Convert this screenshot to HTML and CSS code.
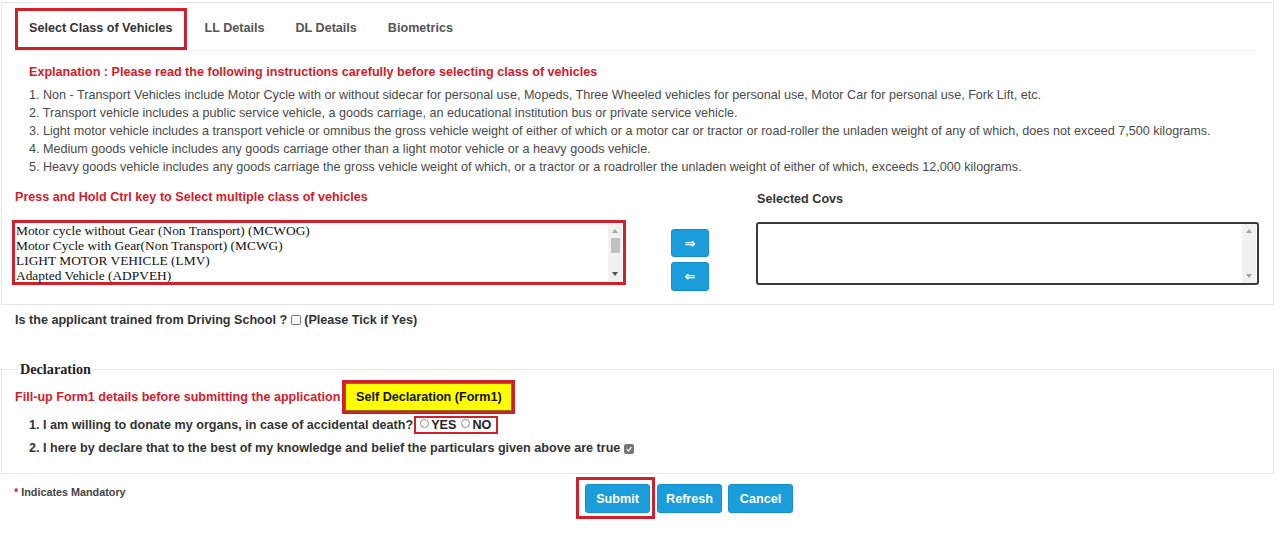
FILE: index.html
```html
<!DOCTYPE html>
<html lang="en">
<head>
<meta charset="utf-8">
<title>Select Class of Vehicles</title>
<link rel="stylesheet" href="styles.css">
</head>
<body>
<div class="panel">
  <ul class="tabs">
    <li class="tab active">Select Class of Vehicles</li>
    <li class="tab">LL Details</li>
    <li class="tab">DL Details</li>
    <li class="tab">Biometrics</li>
  </ul>
  <div class="explain">
    <div class="warn heading">Explanation : Please read the following instructions carefully before selecting class of vehicles</div>
    <div class="line">1. Non - Transport Vehicles include Motor Cycle with or without sidecar for personal use, Mopeds, Three Wheeled vehicles for personal use, Motor Car for personal use, Fork Lift, etc.</div>
    <div class="line">2. Transport vehicle includes a public service vehicle, a goods carriage, an educational institution bus or private service vehicle.</div>
    <div class="line">3. Light motor vehicle includes a transport vehicle or omnibus the gross vehicle weight of either of which or a motor car or tractor or road-roller the unladen weight of any of which, does not exceed 7,500 kilograms.</div>
    <div class="line">4. Medium goods vehicle includes any goods carriage other than a light motor vehicle or a heavy goods vehicle.</div>
    <div class="line">5. Heavy goods vehicle includes any goods carriage the gross vehicle weight of which, or a tractor or a roadroller the unladen weight of either of which, exceeds 12,000 kilograms.</div>
  </div>
  <div class="cov-row">
    <div class="cov-left">
      <div class="warn label">Press and Hold Ctrl key to Select multiple class of vehicles</div>
      <div class="listbox">
        <div class="options">
          <div class="opt">Motor cycle without Gear (Non Transport) (MCWOG)</div>
          <div class="opt">Motor Cycle with Gear(Non Transport) (MCWG)</div>
          <div class="opt">LIGHT MOTOR VEHICLE (LMV)</div>
          <div class="opt">Adapted Vehicle (ADPVEH)</div>
        </div>
        <div class="sbar">
          <span class="arr up"></span>
          <span class="thumb"></span>
          <span class="track"></span>
          <span class="arr down"></span>
        </div>
      </div>
    </div>
    <div class="arrows">
      <button class="abtn" type="button">&#8658;</button>
      <button class="abtn" type="button">&#8656;</button>
    </div>
    <div class="cov-right">
      <div class="label dark">Selected Covs</div>
      <div class="selbox">
        <div class="sbar light">
          <span class="arr up grey"></span>
          <span class="track"></span>
          <span class="arr down grey"></span>
        </div>
      </div>
    </div>
  </div>
</div>

<div class="school">Is the applicant trained from Driving School ? <span class="cb"></span> (Please Tick if Yes)</div>

<fieldset class="decl">
  <legend>Declaration</legend>
  <div class="form1-row">
    <span class="warn">Fill-up Form1 details before submitting the application</span>
    <button class="yellow" type="button">Self Declaration (Form1)</button>
  </div>
  <div class="item item1">1. I am willing to donate my organs, in case of accidental death?<span class="yesno"><span class="radio"></span>YES<span class="radio second"></span>NO</span></div>
  <div class="item item2">2. I here by declare that to the best of my knowledge and belief the particulars given above are true <span class="cb checked"><svg viewBox="0 0 10 10" width="8" height="8"><path d="M2 5.2 L4.2 7.3 L8 2.8" fill="none" stroke="#fff" stroke-width="1.6"/></svg></span></div>
</fieldset>

<div class="footer">
  <div class="mandatory"><span class="star">*</span> Indicates Mandatory</div>
  <div class="submit-wrap"><button class="btn" type="button">Submit</button></div>
  <button class="btn refresh" type="button">Refresh</button>
  <button class="btn cancel" type="button">Cancel</button>
</div>
</body>
</html>
```

FILE: styles.css
```css
* { box-sizing: border-box; }
body {
  margin: 0;
  font-family: "Liberation Sans", Arial, sans-serif;
  font-size: 12.6px;
  color: #333;
  background: #fff;
}
.warn { color: #d0202b; font-weight: bold; }
.panel {
  margin: 2px 6px 0 1px;
  border: 1px solid #e6e6e6;
  padding-bottom: 13px;
}
.tabs {
  list-style: none;
  margin: 5px 17px 0 13px;
  padding: 0;
  display: flex;
  border-bottom: 1px solid #eee;
}
.tab {
  height: 42px;
  line-height: 40px;
  padding: 0 15px;
  font-weight: bold;
  color: #555;
  margin-right: 1px;
}
.tab.active {
  border: 3px solid #d0202b;
  line-height: 34px;
  padding: 0 11px;
  color: #333;
  margin-right: 3px;
}
.explain { padding-left: 27px; margin-top: 12px; }
.heading { line-height: 18px; margin-bottom: 5px; }
.line { line-height: 18px; color: #4a4a4a; white-space: nowrap; }
.cov-row {
  display: flex;
  align-items: flex-start;
  padding-left: 10px;
  margin-top: 12px;
}
.cov-left { width: 614px; }
.label { line-height: 18px; margin-left: 3px; margin-bottom: 14px; }
.label.dark { color: #333; font-weight: bold; margin-left: 1px; margin-top: 2px; margin-bottom: 14px; }
.listbox {
  height: 65px;
  border: 3px solid #d0202b;
  display: flex;
  background: #fff;
}
.options {
  flex: 1;
  font-family: "Liberation Serif", "Times New Roman", serif;
  font-size: 13.4px;
  color: #111;
  padding: 0 0 0 1px;
}
.opt { line-height: 15px; white-space: nowrap; }
.sbar {
  width: 14px;
  margin: 1px 1px 1px 0;
  display: flex;
  flex-direction: column;
  align-items: center;
  background: #f1f1f1;
}
.sbar .arr { width: 0; height: 0; border-left: 3px solid transparent; border-right: 3px solid transparent; margin: 5px 0; }
.sbar .arr.up { border-bottom: 4px solid #a3a3a3; }
.sbar .arr.down { border-top: 4px solid #505050; }
.sbar .arr.grey.down { border-top-color: #a3a3a3; }
.sbar .thumb { width: 9px; height: 15px; background: #c1c1c1; }
.sbar .track { flex: 1; }
.arrows {
  margin-left: 45px;
  margin-top: 41px;
  display: flex;
  flex-direction: column;
  gap: 5px;
}
.abtn {
  width: 38px;
  height: 28px;
  border: 1px solid #1590cc;
  border-radius: 3px;
  background: #1b9ddb;
  color: #fff;
  font-size: 13px;
  font-weight: bold;
  padding: 0;
  line-height: 1;
  font-family: "DejaVu Sans", sans-serif;
}
.abtn + .abtn { height: 29px; }
.cov-right { margin-left: 47px; width: 503px; }
.selbox {
  height: 63px;
  border: 2px solid #3a3a3a;
  border-radius: 3px;
  display: flex;
  justify-content: flex-end;
}
.sbar.light { margin: 0 1px 0 0; }
.school {
  margin: 6px 0 0 15px;
  line-height: 18px;
  font-weight: bold;
  color: #333;
}
.cb {
  display: inline-block;
  width: 10px;
  height: 10px;
  border: 1px solid #767676;
  border-radius: 2px;
  vertical-align: -1px;
  background: #fff;
}
.cb.checked {
  background: #767676;
  display: inline-flex;
  align-items: center;
  justify-content: center;
}
.decl {
  margin: 32px 6px 0 1px;
  padding: 2px 0 16px 13px;
  border: 1px solid #e6e6e6;
  min-width: 0;
}
.decl legend {
  margin-left: 3px;
  padding: 0 2px;
  font-family: "Liberation Serif", "Times New Roman", serif;
  font-size: 14.2px;
  font-weight: bold;
  color: #222;
}
.form1-row { display: flex; align-items: center; height: 34px; }
.yellow {
  margin-left: 2px;
  width: 173px;
  height: 34px;
  border: 3px solid #d0202b;
  box-shadow: inset 0 0 0 1px #9a6a20;
  background: #ffff00;
  color: #111;
  font-family: "Liberation Sans", Arial, sans-serif;
  font-size: 12.6px;
  font-weight: bold;
  padding: 0;
}
.item {
  padding-left: 14px;
  font-weight: bold;
  color: #333;
  line-height: 18px;
}
.item1 { margin-top: 2px; display: flex; align-items: center; }
.item2 { margin-top: 5px; }
.yesno {
  margin-left: 1px;
  height: 18px;
  border: 2px solid #d0202b;
  padding: 0 5px 0 4px;
  display: inline-flex;
  align-items: center;
  line-height: 14px;
  color: #222;
}
.radio {
  display: inline-block;
  width: 9px;
  height: 9px;
  border: 1px solid #8a8a8a;
  border-radius: 50%;
  margin-right: 2px;
  margin-top: -3px;
}
.radio.second { margin-left: 5px; }
.footer {
  display: flex;
  align-items: flex-start;
  margin-top: 3px;
  padding-left: 14px;
}
.mandatory {
  width: 562px;
  margin-top: 9px;
  font-size: 10.8px;
  font-weight: bold;
  color: #444;
}
.star { color: #d0202b; }
.submit-wrap {
  border: 3px solid #d0202b;
  padding: 4px 2px 3px 6px;
}
.btn {
  width: 65px;
  height: 29px;
  border: 1px solid #1590cc;
  border-radius: 3px;
  background: #1b9ddb;
  color: #fff;
  font-family: "Liberation Sans", Arial, sans-serif;
  font-size: 12.6px;
  font-weight: bold;
  padding: 0;
}
.refresh { margin-left: 2px; margin-top: 7px; }
.cancel { margin-left: 6px; margin-top: 7px; }
```
